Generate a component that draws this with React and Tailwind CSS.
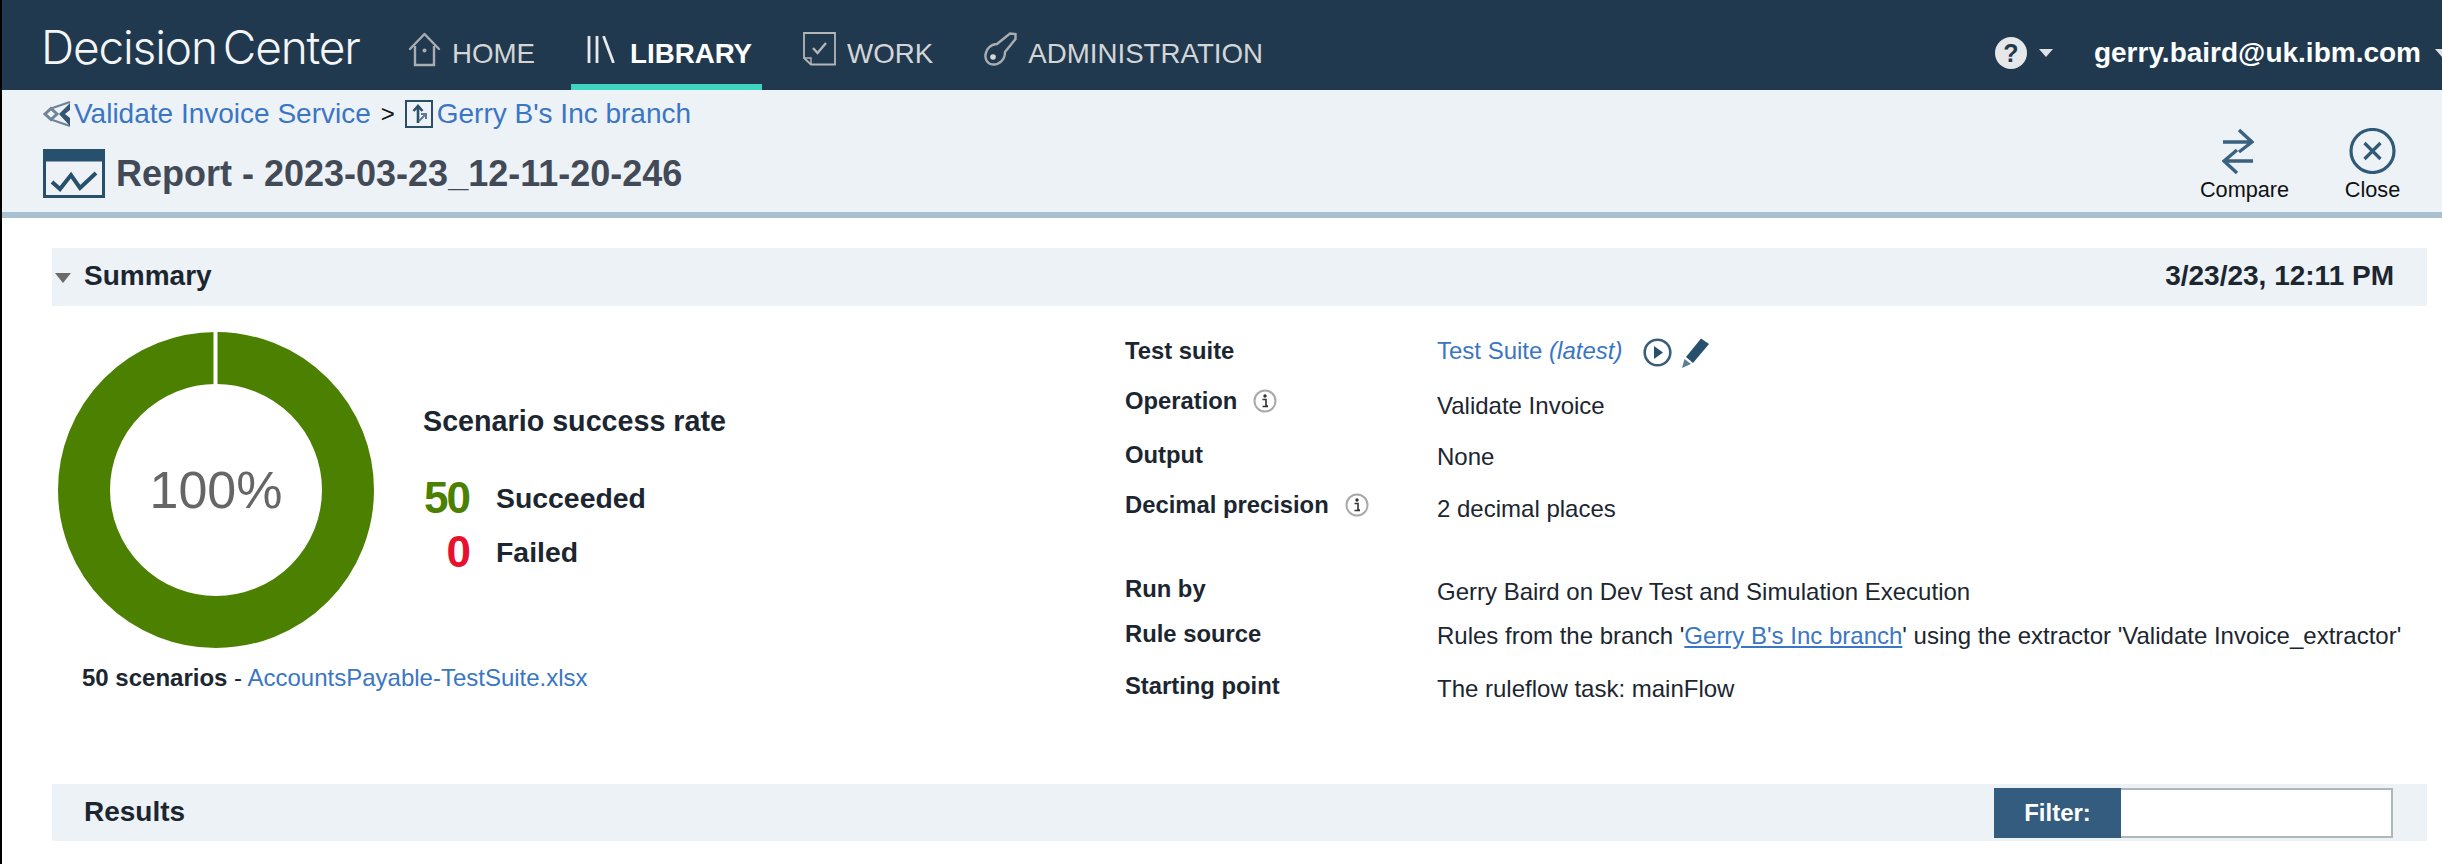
const F = "font-['Liberation_Sans',Arial,sans-serif]";

function HomeIcon() {
  return (
    <svg width="33" height="35" viewBox="0 0 33 35" fill="none" stroke="#a9adaf" strokeWidth="2.4" className="shrink-0">
      <path d="M2 17 L16.5 2 L31 17" strokeLinejoin="round" strokeLinecap="round" />
      <path d="M7 14 V33 H26 V14" />
      <circle cx="16.5" cy="18.5" r="2" fill="#a9adaf" stroke="none" />
    </svg>
  );
}
function LibraryIcon() {
  return (
    <svg width="28" height="27" viewBox="0 0 28 27" fill="none" stroke="#e6e8ea" strokeWidth="2.8" className="shrink-0">
      <path d="M2 0 V27 M10 0 V27 M16.5 0 L26.5 27" />
    </svg>
  );
}
function WorkIcon() {
  return (
    <svg width="33" height="34" viewBox="0 0 33 34" fill="none" stroke="#b4b6b6" strokeWidth="1.8" className="shrink-0">
      <path d="M1 1 H32 V32.5 H8 L1 26 Z" />
      <path d="M1 26 L8 26 V32.5" strokeWidth="1.4" />
      <path d="M10 16 L14.5 21 L23 11" strokeWidth="2.4" />
    </svg>
  );
}
function KeyIcon() {
  return (
    <svg width="33" height="34" viewBox="0 0 33 34" fill="none" stroke="#a9adaf" strokeWidth="2.4" className="shrink-0">
      <path d="M13 12 L26 1.5 L31.5 2 L31.5 7 L21 20 C21 28 15 33 9 32.5 C3 32 1 27 1.5 23 C2 17 7 12 13 12 Z" />
      <circle cx="9" cy="25" r="2.8" fill="#d6d8d9" stroke="none" />
    </svg>
  );
}
function Caret({ className = "" }) {
  return <div className={"w-0 h-0 border-x-[7px] border-x-transparent border-t-[8px] border-t-[#dfe2e5] " + className} />;
}
function ServiceIcon() {
  return (
    <svg width="28" height="26" viewBox="0 0 28 26" fill="none" className="shrink-0">
      <path d="M2 13 L8 7.5 L14 13 L8 18.5 Z" stroke="#6f8497" strokeWidth="3" />
      <path d="M8 7.5 L27 1 M8 18.5 L27 25" stroke="#6f8497" strokeWidth="2.2" />
      <path d="M16 13 L27 2 V9 L22 13 L27 17 V25 Z" fill="#34566e" />
    </svg>
  );
}
function BranchIcon() {
  return (
    <svg width="28" height="28" viewBox="0 0 28 28" fill="none" className="shrink-0">
      <rect x="1" y="1" width="26" height="26" fill="#eef2f6" stroke="#2a4f69" strokeWidth="2" />
      <path d="M13 23 V6 M8.5 11 L13 6 L17.5 11" stroke="#2a4f69" strokeWidth="2.6" />
      <path d="M14 21 L20 15 M16 14 H21 V19" stroke="#5d7a90" strokeWidth="2" />
    </svg>
  );
}
function ReportIcon() {
  return (
    <svg width="62" height="49" viewBox="0 0 62 49" fill="none" className="shrink-0">
      <rect x="1.5" y="1.5" width="59" height="46" fill="#eef2f6" stroke="#27506d" strokeWidth="3" />
      <rect x="1.5" y="1.5" width="59" height="11" fill="#27506d" />
      <path d="M9 33 L17 40 L28 26 L37 39 L53 24" stroke="#27506d" strokeWidth="4" />
    </svg>
  );
}
function CompareIcon() {
  return (
    <svg width="32" height="46" viewBox="0 0 32 46" fill="none" stroke="#3a6180" strokeWidth="3.4" className="shrink-0">
      <path d="M1 14 H30 M17 2 L30 14 L17 24" />
      <path d="M31 33 H2 M15 22 L2 33 L15 45" />
    </svg>
  );
}
function CloseIcon() {
  return (
    <svg width="47" height="46" viewBox="0 0 47 46" fill="none" stroke="#2f5a78" strokeWidth="3.2" className="shrink-0">
      <circle cx="23.5" cy="23" r="21.5" />
      <path d="M15.5 15 L31.5 31 M31.5 15 L15.5 31" />
    </svg>
  );
}
function InfoIcon() {
  return (
    <svg width="24" height="24" viewBox="0 0 24 24" fill="none" className="shrink-0">
      <circle cx="12" cy="12" r="10.5" stroke="#a9a9a9" strokeWidth="2" />
      <circle cx="12" cy="7" r="1.7" fill="#333" />
      <path d="M9.5 10.5 H13 V17 H15 M9.5 17.5 H15" stroke="#333" strokeWidth="1.6" />
    </svg>
  );
}
function PlayIcon() {
  return (
    <svg width="29" height="29" viewBox="0 0 29 29" fill="none" className="shrink-0">
      <circle cx="14.5" cy="14.5" r="12.8" stroke="#3a5e78" strokeWidth="2.6" />
      <path d="M11 8 L20 14.5 L11 21 Z" fill="#27506d" />
    </svg>
  );
}
function PencilIcon() {
  return (
    <svg width="31" height="31" viewBox="0 0 31 31" fill="none" className="shrink-0">
      <path d="M7 20 L22 1.5 L30 7 L14 26 Z" fill="#27506d" />
      <path d="M5.5 22 L12 27 L3 31 Z" fill="#5f7d94" />
    </svg>
  );
}
function Donut() {
  return (
    <div className="relative w-[316px] h-[316px] shrink-0">
      <svg width="316" height="316" viewBox="0 0 316 316">
        <circle cx="158" cy="158" r="132" fill="none" stroke="#4b8000" strokeWidth="52" />
        <rect x="155.5" y="0" width="4" height="53" fill="#ffffff" />
      </svg>
      <div className={"absolute inset-0 flex items-center justify-center text-[52px] text-[#666666] " + F}>100%</div>
    </div>
  );
}

export default function App() {
  return (
    <div className={"w-[2442px] h-[864px] overflow-hidden bg-white border-l-2 border-black flex flex-col text-[#1c2630] " + F}>
      <header className="h-[90px] shrink-0 bg-[#20394f] flex items-stretch pl-[39px] text-[27.7px] leading-[28px] text-[#d4d5d6]">
        <div className="w-[320px] h-[93px] flex items-center text-[46px] leading-[50px] font-light tracking-[-1.15px] text-[#f4f5f6] font-['Inter',sans-serif] whitespace-nowrap">
          Decision<span className="ml-[6px]">Center</span>
        </div>
        <div className="ml-[47px] flex items-center gap-[11px] h-[98px]"><HomeIcon /><span className="pt-[10px]">HOME</span></div>
        <div className="ml-[36px] pl-[16px] pr-[10px] flex items-center gap-[15px] h-[90px] border-b-[6px] border-[#3fd5c0] text-white font-bold pt-[24px]"><span className="mb-[10px]"><LibraryIcon /></span><span>LIBRARY</span></div>
        <div className="ml-[41px] flex items-center gap-[11px] h-[98px]"><WorkIcon /><span className="pt-[10px]">WORK</span></div>
        <div className="ml-[51px] flex items-center gap-[11px] h-[98px]"><KeyIcon /><span className="pt-[10px]">ADMINISTRATION</span></div>
        <div className="ml-auto flex items-center h-[106px] self-start shrink-0">
          <div className="w-[32px] h-[32px] rounded-full bg-[#e6e7e8] text-[#20394f] font-bold text-[25px] leading-[32px] text-center">?</div>
          <Caret className="ml-[12px]" />
          <span className="ml-[41px] text-[28px] font-bold text-white">gerry.baird@uk.ibm.com</span>
          <Caret className="ml-[14px] mr-[-7px]" />
        </div>
      </header>

      <section className="h-[128px] shrink-0 bg-[#edf2f6] border-b-[6px] border-[#a9bfd2] flex justify-between pl-[41px]">
        <div>
          <div className="h-[48px] flex items-center text-[28px] text-[#3a76c4] whitespace-nowrap">
            <ServiceIcon />
            <span className="ml-[3px]">Validate Invoice Service</span>
            <span className="ml-[10px] text-[#111111] text-[24px]">&gt;</span>
            <span className="ml-[10px]"><BranchIcon /></span>
            <span className="ml-[4px]">Gerry B's Inc branch</span>
          </div>
          <div className="h-[71px] flex items-center text-[36px] font-bold text-[#434a57] whitespace-nowrap">
            <ReportIcon />
            <span className="ml-[11px]">Report - 2023-03-23_12-11-20-246</span>
          </div>
        </div>
        <div className="flex pr-[42px] pt-[38px] text-[21.7px] leading-[24px] text-[#111111]">
          <div className="flex flex-col items-center w-[89px]">
            <div className="mr-[14px]"><CompareIcon /></div>
            <span className="mt-[4px]">Compare</span>
          </div>
          <div className="flex flex-col items-center ml-[56px] w-[55px]">
            <CloseIcon />
            <span className="mt-[4px]">Close</span>
          </div>
        </div>
      </section>

      <main className="ml-[50px] w-[2375px] pt-[30px] flex flex-col">
        <div className="h-[58px] bg-[#edf2f6] flex items-center justify-between pl-[3px] pr-[33px] pb-[2px] text-[28px] font-bold">
          <div className="flex items-center">
            <div className="w-0 h-0 border-x-[8px] border-x-transparent border-t-[10px] border-t-[#6b6b6b] mt-[4px]" />
            <span className="ml-[13px]">Summary</span>
          </div>
          <span>3/23/23, 12:11 PM</span>
        </div>

        <div className="h-[478px] flex pt-[26px]">
          <div className="w-[1073px] shrink-0 pl-[6px]">
            <div className="flex">
              <Donut />
              <div className="ml-[49px] pt-[75px]">
                <div className="text-[28.7px] leading-[28px] font-bold whitespace-nowrap">Scenario success rate</div>
                <div className="mt-[38px] flex items-center h-[50px]">
                  <span className="w-[46px] text-right text-[44px] tracking-[-2px] font-bold text-[#4b8000]">50</span>
                  <span className="ml-[27px] text-[28.4px] font-bold">Succeeded</span>
                </div>
                <div className="mt-[4px] flex items-center h-[50px]">
                  <span className="w-[46px] text-right text-[44px] tracking-[-2px] font-bold text-[#e8112d]">0</span>
                  <span className="ml-[27px] text-[28.4px] font-bold">Failed</span>
                </div>
              </div>
            </div>
            <div className="mt-[16px] pl-[24px] text-[24px] leading-[28px] whitespace-nowrap">
              <span className="font-bold">50 scenarios</span> - <span className="text-[#3a76c4]">AccountsPayable-TestSuite.xlsx</span>
            </div>
          </div>

          <div className="pt-[5px] text-[24px] leading-[28px] whitespace-nowrap">
            <div className="flex h-[50px]">
              <div className="w-[312px] font-bold text-[23.8px]">Test suite</div>
              <div className="flex items-start text-[#3a76c4]">Test Suite&nbsp;<i>(latest)</i>
                <span className="ml-[21px] mt-[1px]"><PlayIcon /></span>
                <span className="ml-[7px]"><PencilIcon /></span>
              </div>
            </div>
            <div className="flex h-[54px]">
              <div className="w-[312px] font-bold text-[23.8px] flex items-start gap-[16px]">Operation <span className="mt-[2px]"><InfoIcon /></span></div>
              <div className="pt-[5px]">Validate Invoice</div>
            </div>
            <div className="flex h-[50px]">
              <div className="w-[312px] font-bold text-[23.8px]">Output</div>
              <div className="pt-[2px]">None</div>
            </div>
            <div className="flex h-[84px]">
              <div className="w-[312px] font-bold text-[23.8px] flex items-start gap-[16px]">Decimal precision <span className="mt-[2px]"><InfoIcon /></span></div>
              <div className="pt-[4px]">2 decimal places</div>
            </div>
            <div className="flex h-[45px]">
              <div className="w-[312px] font-bold text-[23.8px]">Run by</div>
              <div className="pt-[3px]">Gerry Baird on Dev Test and Simulation Execution</div>
            </div>
            <div className="flex h-[52px]">
              <div className="w-[312px] font-bold text-[23.8px]">Rule source</div>
              <div className="pt-[2px]">Rules from the branch '<span className="text-[#3a76c4] underline">Gerry B's Inc branch</span>' using the extractor 'Validate Invoice_extractor'</div>
            </div>
            <div className="flex h-[40px]">
              <div className="w-[312px] font-bold text-[23.8px]">Starting point</div>
              <div className="pt-[3px]">The ruleflow task: mainFlow</div>
            </div>
          </div>
        </div>

        <div className="h-[57px] bg-[#edf2f6] flex justify-between pl-[32px] pr-[34px] pt-[4px]">
          <span className="text-[28px] leading-[48px] font-bold">Results</span>
          <div className="flex h-[50px]">
            <div className="w-[127px] bg-[#335c7f] text-white font-bold text-[24px] flex items-center justify-center">Filter:</div>
            <input aria-label="Filter" className="w-[272px] h-[50px] bg-white border-2 border-[#aeb8b8] border-l-0 outline-none" />
          </div>
        </div>
      </main>
    </div>
  );
}
